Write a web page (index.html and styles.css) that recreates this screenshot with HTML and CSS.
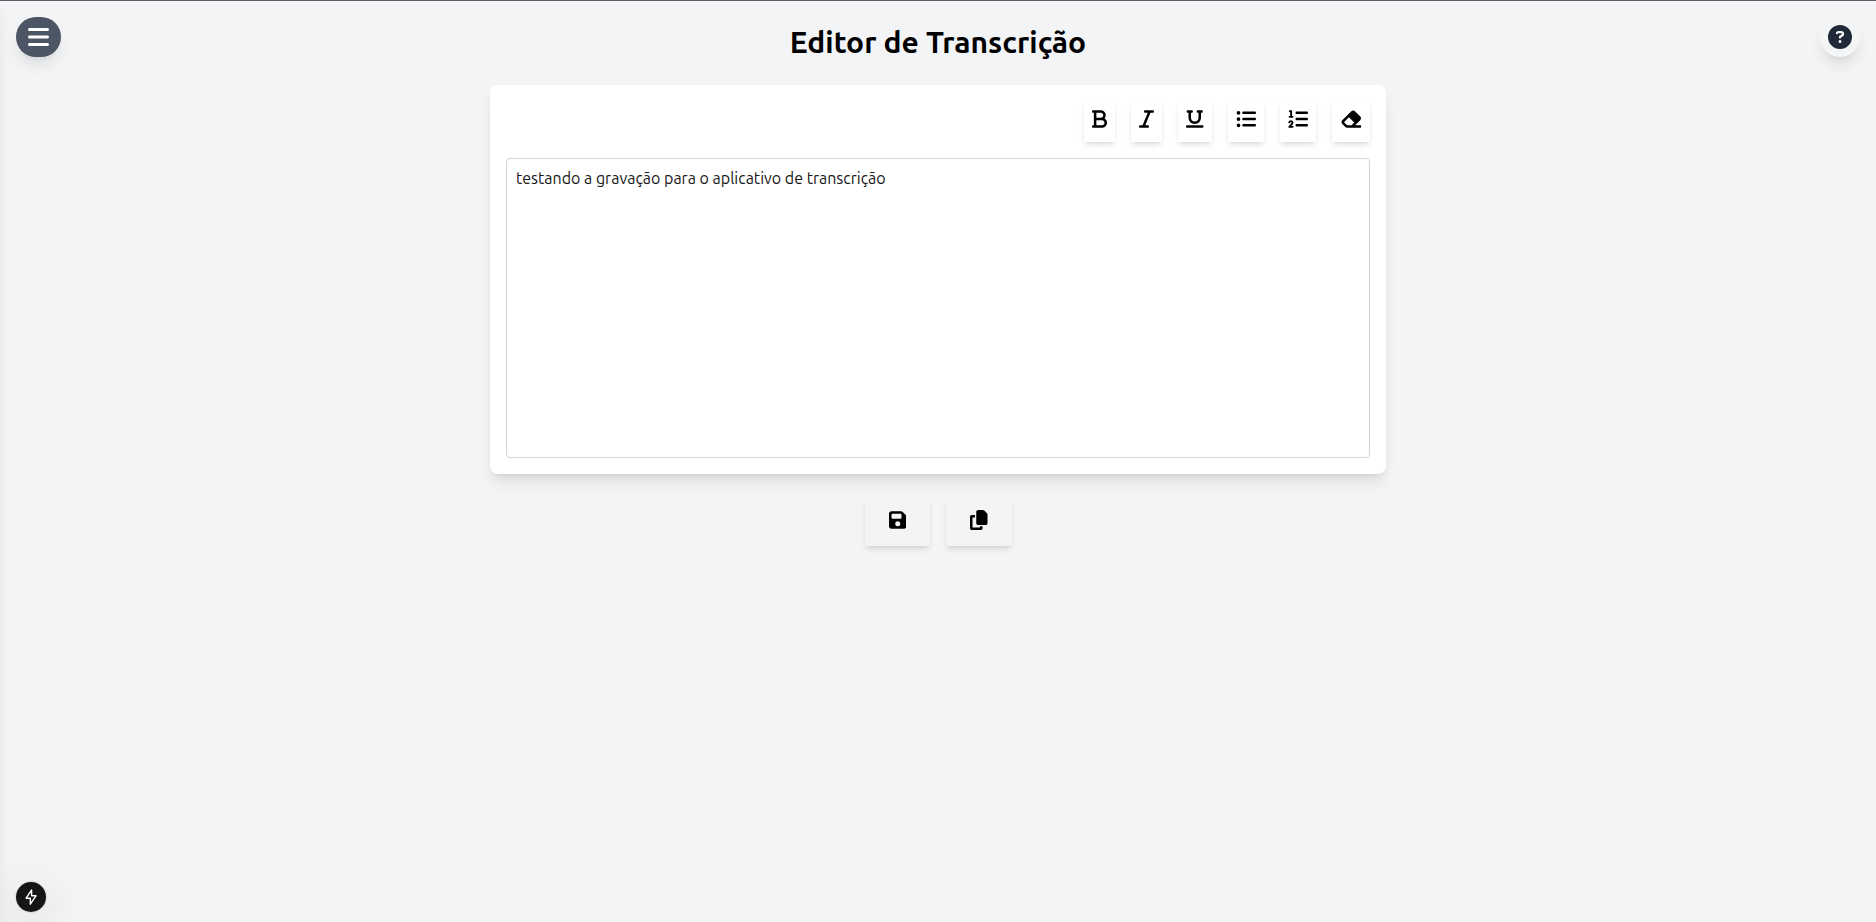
FILE: index.html
```html
<!DOCTYPE html>
<html lang="pt-BR">
<head>
<meta charset="utf-8">
<title>Editor de Transcrição</title>
<link rel="stylesheet" href="styles.css">
</head>
<body>
<aside class="drawer"></aside>
<button class="menu-btn" aria-label="Menu"><svg viewBox="0 0 448 512" width="21" height="24"><path d="M0 96C0 78.300 14.300 64 32 64H416c17.700 0 32 14.300 32 32s-14.300 32-32 32H32C14.300 128 0 113.700 0 96zM0 256c0-17.700 14.300-32 32-32H416c17.700 0 32 14.300 32 32s-14.300 32-32 32H32c-17.700 0-32-14.300-32-32zM448 416c0 17.700-14.300 32-32 32H32c-17.700 0-32-14.300-32-32s14.300-32 32-32H416c17.700 0 32 14.300 32 32z"/></svg></button>
<button class="help-btn" aria-label="Ajuda"><svg viewBox="0 0 512 512" width="24" height="24"><path d="M256 512A256 256 0 1 0 256 0a256 256 0 1 0 0 512zM169.800 165.300c7.900-22.300 29.100-37.300 52.800-37.300h58.300c34.900 0 63.100 28.300 63.100 63.100c0 22.600-12.100 43.500-31.700 54.800L280 264.400c-.2 13-10.900 23.600-24 23.600c-13.300 0-24-10.700-24-24V250.500c0-8.600 4.600-16.500 12.100-20.800l44.300-25.400c4.700-2.700 7.600-7.700 7.600-13.100c0-8.400-6.800-15.100-15.100-15.100H222.600c-3.400 0-6.400 2.100-7.500 5.300l-.4 1.200c-4.400 12.500-18.200 19-30.600 14.600s-19-18.200-14.600-30.600l.3-1.300zM224 352a32 32 0 1 1 64 0 32 32 0 1 1-64 0z"/></svg></button>
<main class="page">
  <h1 class="title">Editor de Transcrição</h1>
  <section class="card">
    <div class="toolbar">
      <button class="tool" aria-label="Negrito"><svg viewBox="0 0 384 512" width="15" height="20"><path d="M0 64C0 46.300 14.300 32 32 32H80 96 224c70.700 0 128 57.300 128 128c0 31.300-11.300 60.100-30 82.300c37.100 22.400 62 63.100 62 109.700c0 70.700-57.300 128-128 128H96 80 32c-17.700 0-32-14.300-32-32s14.300-32 32-32H48V256 96H32C14.300 96 0 81.700 0 64zM224 224c35.300 0 64-28.700 64-64s-28.700-64-64-64H112V224H224zM112 288V416H256c35.300 0 64-28.700 64-64s-28.700-64-64-64H224 112z"/></svg></button>
      <button class="tool" aria-label="Itálico"><svg viewBox="0 0 384 512" width="15" height="20"><path d="M128 64c0-17.700 14.300-32 32-32H352c17.700 0 32 14.300 32 32s-14.300 32-32 32H293.300L160 416h64c17.700 0 32 14.300 32 32s-14.300 32-32 32H32c-17.700 0-32-14.300-32-32s14.300-32 32-32H90.700L224 96H160c-17.700 0-32-14.300-32-32z"/></svg></button>
      <button class="tool" aria-label="Sublinhado"><svg viewBox="0 0 448 512" width="17.5" height="20"><path d="M16 64c0-17.700 14.300-32 32-32h96c17.700 0 32 14.300 32 32s-14.300 32-32 32H128V224c0 53 43 96 96 96s96-43 96-96V96H304c-17.700 0-32-14.300-32-32s14.300-32 32-32h96c17.700 0 32 14.300 32 32s-14.300 32-32 32H384V224c0 88.400-71.600 160-160 160s-160-71.600-160-160V96H48C30.300 96 16 81.700 16 64zM0 448c0-17.700 14.300-32 32-32H416c17.700 0 32 14.300 32 32s-14.300 32-32 32H32c-17.700 0-32-14.300-32-32z"/></svg></button>
      <button class="tool" aria-label="Lista"><svg viewBox="0 0 512 512" width="20" height="20"><path d="M64 144a48 48 0 1 0 0-96 48 48 0 1 0 0 96zM192 64c-17.700 0-32 14.300-32 32s14.300 32 32 32H480c17.700 0 32-14.300 32-32s-14.300-32-32-32H192zm0 160c-17.700 0-32 14.300-32 32s14.300 32 32 32H480c17.700 0 32-14.300 32-32s-14.300-32-32-32H192zm0 160c-17.700 0-32 14.300-32 32s14.300 32 32 32H480c17.700 0 32-14.300 32-32s-14.300-32-32-32H192zM64 464a48 48 0 1 0 0-96 48 48 0 1 0 0 96zm48-208a48 48 0 1 0 -96 0 48 48 0 1 0 96 0z"/></svg></button>
      <button class="tool" aria-label="Lista numerada"><svg viewBox="0 0 512 512" width="20" height="20"><path d="M24 56c0-13.300 10.700-24 24-24H80c13.300 0 24 10.700 24 24V176h16c13.300 0 24 10.700 24 24s-10.700 24-24 24H40c-13.300 0-24-10.700-24-24s10.700-24 24-24H56V80H48C34.700 80 24 69.300 24 56zM86.700 341.200c-6.500-7.400-18.300-6.900-24 1.200L51.500 357.900c-7.700 10.800-22.700 13.300-33.500 5.600s-13.300-22.700-5.600-33.500l11.100-15.600c23.700-33.200 72.300-35.600 99.200-4.900c21.300 24.400 20.800 60.900-1.100 84.700L86.800 432H120c13.300 0 24 10.700 24 24s-10.700 24-24 24H32c-9.500 0-18.200-5.600-22-14.400s-2.100-18.900 4.300-25.900l72-78c5.300-5.800 5.400-14.600 .3-20.500zM224 64H480c17.700 0 32 14.300 32 32s-14.300 32-32 32H224c-17.700 0-32-14.300-32-32s14.300-32 32-32zm0 160H480c17.700 0 32 14.300 32 32s-14.300 32-32 32H224c-17.700 0-32-14.300-32-32s14.300-32 32-32zm0 160H480c17.700 0 32 14.300 32 32s-14.300 32-32 32H224c-17.700 0-32-14.300-32-32s14.300-32 32-32z"/></svg></button>
      <button class="tool" aria-label="Limpar"><svg viewBox="0 0 576 512" width="22.5" height="20"><path d="M290.700 57.400L57.400 290.700c-25 25-25 65.500 0 90.500l80 80c12 12 28.300 18.700 45.300 18.700H288h9.400H512c17.700 0 32-14.300 32-32s-14.300-32-32-32H387.900L518.600 285.300c25-25 25-65.500 0-90.500L381.300 57.400c-25-25-65.500-25-90.500 0zM297.400 416H288l-105.400 0-80-80L227.300 211.300 364.700 348.700 297.400 416z"/></svg></button>
    </div>
    <div class="editor">testando a gravação para o aplicativo de transcrição</div>
  </section>
  <div class="actions">
    <button class="action" aria-label="Salvar"><svg viewBox="0 0 448 512" width="17.5" height="20"><path d="M64 32C28.700 32 0 60.700 0 96V416c0 35.300 28.700 64 64 64H384c35.300 0 64-28.700 64-64V173.300c0-17-6.700-33.300-18.700-45.300L352 50.700C340 38.700 323.700 32 306.700 32H64zm0 96c0-17.700 14.300-32 32-32H288c17.700 0 32 14.300 32 32v64c0 17.700-14.300 32-32 32H96c-17.700 0-32-14.300-32-32V128zM224 288a64 64 0 1 1 0 128 64 64 0 1 1 0-128z"/></svg></button>
    <button class="action" aria-label="Copiar"><svg viewBox="0 0 448 512" width="17.5" height="20"><path d="M208 0H332.100c12.700 0 24.900 5.100 33.900 14.100l67.900 67.900c9 9 14.100 21.200 14.100 33.900V336c0 26.500-21.500 48-48 48H208c-26.500 0-48-21.500-48-48V48c0-26.500 21.500-48 48-48zM48 128h80v64H64V448H256V416h64v48c0 26.500-21.500 48-48 48H48c-26.500 0-48-21.500-48-48V176c0-26.500 21.500-48 48-48z"/></svg></button>
  </div>
</main>
<div class="dev-badge"><svg viewBox="0 0 16 16" width="16" height="16"><path d="M8.600 .9L3.100 9.200h4.200v6L13 6.800H8.600z"/></svg></div>
</body>
</html>
```
FILE: styles.css
```css
* { box-sizing: border-box; }
body {
  margin: 0;
  height: 922px;
  overflow: hidden;
  background: #f3f4f6;
  border-top: 1px solid #5f5e63;
  color: #000;
  font-family: Ubuntu, "Noto Sans", sans-serif;
}
button { border: 0; margin: 0; font: inherit; color: inherit; background: transparent; }
svg { display: block; fill: currentColor; }
.drawer {
  position: fixed;
  top: 1px;
  left: -256px;
  width: 256px;
  height: 921px;
  background: #fff;
  box-shadow: 0 10px 15px -3px rgba(0,0,0,.1), 0 4px 6px -4px rgba(0,0,0,.1);
}
.menu-btn, .help-btn {
  position: fixed;
  top: 17px;
  padding: 8px;
  border-radius: 9999px;
  box-shadow: 0 10px 15px -3px rgba(0,0,0,.1), 0 4px 6px -4px rgba(0,0,0,.1);
}
.menu-btn { left: 16px; padding: 8px 12px; background: #4b5563; color: #fff; }
.help-btn { right: 16px; background: #f3f4f6; color: #1f2937; }
.page {
  display: flex;
  flex-direction: column;
  align-items: center;
  padding: 23px 24px 24px;
}
.title {
  margin: 0 0 25px;
  font-size: 30px;
  line-height: 36px;
  font-weight: 600;
  white-space: nowrap;
}
.card {
  width: 896px;
  padding: 16px;
  background: #fff;
  border-radius: 8px;
  box-shadow: 0 10px 15px -3px rgba(0,0,0,.1), 0 4px 6px -4px rgba(0,0,0,.1);
}
.toolbar { display: flex; justify-content: flex-end; gap: 16px; margin-bottom: 16px; }
.tool, .action { box-shadow: 0 4px 6px -1px rgba(0,0,0,.1), 0 2px 4px -2px rgba(0,0,0,.1); }
.tool { height: 41px; padding: 8px 8px 13px; }
.editor {
  height: 300px;
  padding: 7px 9px 8px;
  border: 1px solid #d1d5db;
  border-radius: 4px;
  font-size: 16px;
  line-height: 24px;
  color: #171717;
}
.actions { display: flex; gap: 16px; margin-top: 24px; }
.action { height: 48px; padding: 12px 24px 16px; border-radius: 2px; }
.dev-badge {
  position: fixed;
  left: 16px;
  top: 882px;
  width: 30px;
  height: 30px;
  display: grid;
  place-items: center;
  border-radius: 50%;
  background: #151515;
  box-shadow: 0 0 0 1px rgba(0,0,0,.08), 0 10px 40px rgba(0,0,0,.14);
}
.dev-badge svg { fill: none; stroke: #fff; stroke-width: 1.4; stroke-linejoin: round; }
```
